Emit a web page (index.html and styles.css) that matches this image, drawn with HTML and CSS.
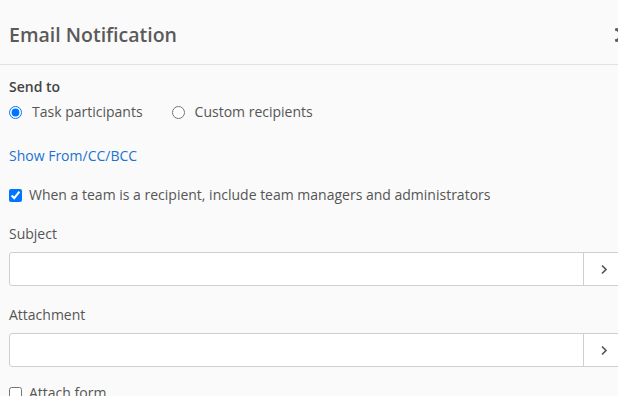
FILE: index.html
```html
<!DOCTYPE html>
<html lang="en">
<head>
    <meta charset="UTF-8">
    <meta name="viewport" content="width=device-width, initial-scale=1.0">
    <title>Email Notification</title>
    <link rel="stylesheet" href="styles.css">
</head>
<body>
    <div class="panel">
        <div class="panel-header">
            <h2>Email Notification</h2>
            <svg class="expand-icon" width="16" height="16" viewBox="0 0 16 16" fill="none" stroke="#555" stroke-width="1.6">
                <path d="M2 12 L2 14 L4 14"/>
                <path d="M2 14 L6 10"/>
                <path d="M2 4 L2 2 L4 2"/>
                <path d="M2 2 L6 6"/>
                <path d="M12 2 L14 2 L14 4"/>
                <path d="M14 2 L10 6"/>
                <path d="M12 14 L14 14 L14 12"/>
                <path d="M14 14 L10 10"/>
            </svg>
        </div>
        <div class="panel-body">
            <div class="field-label strong">Send to</div>
            <div class="radio-row">
                <label class="option"><input type="radio" name="sendto" checked> Task participants</label>
                <label class="option"><input type="radio" name="sendto"> Custom recipients</label>
            </div>

            <a class="link" href="#">Show From/CC/BCC</a>

            <label class="check-row"><input type="checkbox" checked> When a team is a recipient, include team managers and administrators</label>

            <div class="field-label">Subject</div>
            <div class="input-group">
                <input type="text">
                <button type="button"><svg width="8" height="11" viewBox="0 0 8 11" fill="none" stroke="#555" stroke-width="1.7"><path d="M2 1.5 L6 5.5 L2 9.5"/></svg></button>
            </div>

            <div class="field-label">Attachment</div>
            <div class="input-group">
                <input type="text">
                <button type="button"><svg width="8" height="11" viewBox="0 0 8 11" fill="none" stroke="#555" stroke-width="1.7"><path d="M2 1.5 L6 5.5 L2 9.5"/></svg></button>
            </div>

            <label class="check-row last"><input type="checkbox"> Attach form</label>
        </div>
    </div>
</body>
</html>
```

FILE: styles.css
```css
body {
    margin: 0;
    background-color: #fafafa;
    font-family: "Open Sans", Arial, sans-serif;
    font-size: 14px;
    color: #555;
    overflow: hidden;
}

.panel {
    width: 640px;
}

.panel-header {
    display: flex;
    align-items: center;
    height: 65px;
    padding: 6px 10px 0 9px;
    box-sizing: border-box;
    border-bottom: 1px solid #e2e2e2;
}

.panel-header h2 {
    margin: 0;
    font-size: 19.5px;
    font-weight: 600;
    color: #5a5a5a;
    line-height: 26px;
}

.expand-icon {
    margin-left: auto;
}

.panel-body {
    padding: 12px 0 0 9px;
    display: flex;
    flex-direction: column;
    align-items: flex-start;
}

.field-label {
    line-height: 20px;
    margin-top: 19px;
    margin-bottom: 8px;
}

.field-label.strong {
    margin-top: 0;
    margin-bottom: 5px;
    font-weight: 600;
    color: #444;
}

.radio-row {
    display: flex;
    gap: 29px;
    line-height: 20px;
}

.option,
.check-row {
    display: flex;
    align-items: center;
    gap: 10px;
    line-height: 20px;
}

.option input,
.check-row input {
    margin: 0;
    width: 13px;
    height: 13px;
}

.check-row {
    gap: 7px;
    margin-top: 19px;
}

.check-row.last {
    margin-top: 16px;
}

.link {
    margin-top: 24px;
    line-height: 20px;
    color: #1a73d0;
    text-decoration: none;
}

.input-group {
    display: flex;
    width: 615px;
    height: 34px;
    box-sizing: border-box;
    background-color: #fff;
    border: 1px solid #cfcfcf;
    border-radius: 3px;
}

.input-group input {
    flex: 1;
    border: none;
    outline: none;
    padding: 0 10px;
    font-family: inherit;
    font-size: 14px;
    background: transparent;
}

.input-group button {
    width: 40px;
    border: none;
    border-left: 1px solid #cfcfcf;
    background: #fff;
    display: flex;
    align-items: center;
    justify-content: center;
    padding: 0;
    cursor: pointer;
}
```
